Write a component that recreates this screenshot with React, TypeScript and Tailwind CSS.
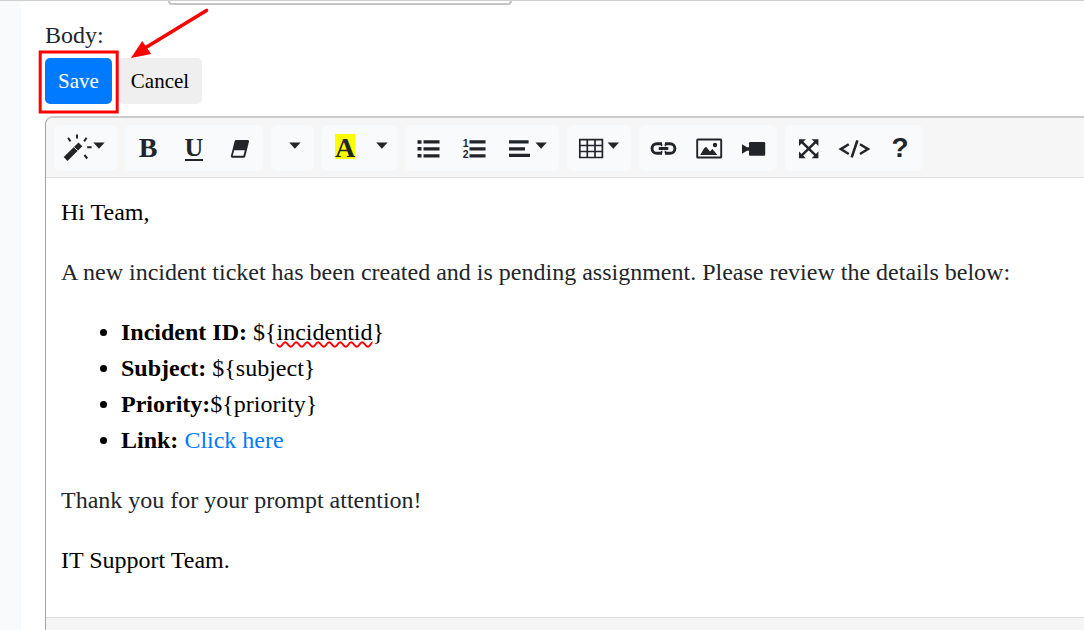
import type { ReactNode } from "react";

const INK = "#212529";

function Caret({ x }: { x: number }) {
  return <path d={`M${x} 17.5h11.4l-5.7 6.2z`} fill={INK} />;
}

type ToolProps = { label: string; w?: string; vw?: number; children: ReactNode };

function Tool({ label, w = "w-[46px]", vw = 46, children }: ToolProps) {
  return (
    <button type="button" aria-label={label} className={`h-[46px] shrink-0 ${w}`}>
      <svg viewBox={`0 0 ${vw} 46`} className="block h-full w-full" fill="none" aria-hidden="true">
        {children}
      </svg>
    </button>
  );
}

function TextTool({ label, children }: { label: string; children: ReactNode }) {
  return (
    <button
      type="button"
      aria-label={label}
      className="flex h-[46px] w-[46px] shrink-0 items-start justify-center text-[28px] leading-[46px] font-bold text-[#212529]"
    >
      {children}
    </button>
  );
}

function Group({ children }: { children: ReactNode }) {
  return <div className="flex shrink-0 rounded-md bg-[#f8fafc]">{children}</div>;
}

function Toolbar() {
  return (
    <div role="toolbar" aria-label="Formatting" className="flex gap-2 overflow-hidden rounded-tl-lg border-b border-[#dfdfdf] bg-[#f6f6f6] px-2 pt-[7px] pb-[6px]">
      <Group>
        <Tool label="Style" w="w-[63px]" vw={63}>
          <path d="M11.6 34L26.4 19.4" stroke={INK} strokeWidth="5.4" />
          <path d="M20.2 22.2l3.6 3.6" stroke="#f8fafc" strokeWidth="0.9" />
          <path d="M23 9.5v4M14 12.8l2.5 3.6M32.6 12.8l-2.5 3.6M33.2 22.2h4.4M30.4 30l2.9 3.5" stroke={INK} strokeWidth="2" />
          <Caret x={39.3} />
        </Tool>
      </Group>
      <Group>
        <TextTool label="Bold"><span>B</span></TextTool>
        <TextTool label="Underline"><span className="mt-3 border-b-2 border-[#212529] text-[26px] leading-[22px]">U</span></TextTool>
        <Tool label="Remove formatting">
          <path d="M19.4 15h11.4q1.6 0 1.2 1.6L28.3 31.2q-.4 1.5-2 1.5H15.3q-1.8 0-1.4-1.6L17.6 16.4q.4-1.4 1.8-1.4z" fill={INK} />
          <path d="M17.2 25.2h10.6l-1.4 5.6H15.7z" fill="#f8fafc" />
        </Tool>
      </Group>
      <Group>
        <Tool label="Font" w="w-[43px]" vw={43}><Caret x={18.2} /></Tool>
      </Group>
      <Group>
        <TextTool label="Text colour"><span className="mt-[9px] h-[25px] bg-[#ffff00] leading-7">A</span></TextTool>
        <Tool label="More colours" w="w-[29px]" vw={29}><Caret x={8.2} /></Tool>
      </Group>
      <Group>
        <Tool label="Bulleted list">
          <path d="M12.5 15.2h4v3.6h-4zM12.5 22h4v3.6h-4zM12.5 29h4v3.6h-4zM18.5 15.2h16v3.4h-16zM18.5 22.2h16v3.4h-16zM18.5 29.2h16v3.4h-16z" fill={INK} />
        </Tool>
        <Tool label="Numbered list">
          <text x="11.8" y="22.2" fontSize="10.5" className="font-bold" fontFamily="Liberation Sans, sans-serif" fill={INK}>1</text>
          <text x="11.8" y="32.9" fontSize="10.5" className="font-bold" fontFamily="Liberation Sans, sans-serif" fill={INK}>2</text>
          <path d="M18.5 15.2h16v3.4h-16zM18.5 22.2h16v3.4h-16zM18.5 29.2h16v3.4h-16z" fill={INK} />
        </Tool>
        <Tool label="Paragraph" w="w-[62px]" vw={62}>
          <path d="M12 15.3h19.6v3.3H12zM12 22.3h16v3.3H12zM12 28.7h21v3.3H12z" fill={INK} />
          <Caret x={38.4} />
        </Tool>
      </Group>
      <Group>
        <Tool label="Table" w="w-[64px]" vw={64}>
          <path d="M12.8 14.6h22.6v17.9H12.8zM20.3 14.5v18M28 14.5v18M12.5 20.5h23M12.5 26.5h23" stroke={INK} strokeWidth="1.7" />
          <Caret x={40.6} />
        </Tool>
      </Group>
      <Group>
        <Tool label="Link">
          <path d="M23 18.7h-5.2a4.8 4.8 0 0 0 0 9.6H23M26 18.7h5.1a4.8 4.8 0 0 1 0 9.6H26M19.8 23.5h9.5" stroke={INK} strokeWidth="2.9" />
          <path d="M22.6 18.7v2.6M22.6 25.7v2.6M26.4 18.7v2.6M26.4 25.7v2.6" stroke={INK} strokeWidth="1.5" />
        </Tool>
        <Tool label="Picture">
          <rect x="12.2" y="14.5" width="24" height="18" rx="0.6" stroke={INK} strokeWidth="1.9" />
          <path d="M15.2 30l3.8-6.4 2-1.8 4 4.6 2.4-2.4 5 6z" fill={INK} />
          <circle cx="30" cy="20" r="2.2" fill={INK} />
        </Tool>
        <Tool label="Video">
          <path d="M11 19.2l5 3h2v3.6h-2l-5 3z" fill={INK} />
          <rect x="18" y="17" width="16.2" height="13.8" rx="1.2" fill={INK} />
        </Tool>
      </Group>
      <Group>
        <Tool label="Full screen">
          <path d="M16 16.2l15.4 15M31.4 16.2l-15.4 15" stroke={INK} strokeWidth="2.5" />
          <path d="M14 14.2h6.8L14 21zM33.4 14.2h-6.8l6.8 6.8zM14 33.2h6.8L14 26.4zM33.4 33.2h-6.8l6.8-6.8z" fill={INK} />
        </Tool>
        <Tool label="Code view">
          <path d="M17.8 19.2l-8 4.9 8 4.9M29 19.2l8 4.9-8 4.9" stroke={INK} strokeWidth="2.5" />
          <path d="M26.4 15.4l-5.7 17" stroke={INK} strokeWidth="2.6" />
        </Tool>
        <TextTool label="Help"><span className="font-['Liberation_Sans',sans-serif]">?</span></TextTool>
      </Group>
    </div>
  );
}

export default function App() {
  return (
    <div className="relative flex min-h-screen overflow-hidden bg-white font-['Liberation_Serif',serif] text-2xl leading-9 text-[#212529]">
      <div className="w-[21px] shrink-0 border-t border-[#cfcfd2] bg-[#f8fafc]" />
      <main className="flex min-w-0 grow flex-col border-t border-[#cfcfd2] pl-6">
        <input aria-label="Subject" className="ml-[123px] h-1 w-[344px] shrink-0 rounded-b-md border-2 border-t-0 border-[#c4c4c4]" />
        <p id="body-label" className="mt-3">Body:</p>
        <div className="mt-[5px] flex gap-[6px] text-[21px] leading-[30px]">
          <button type="button" className="h-[46px] rounded-[5px] bg-[#007bff] px-[13px] text-white">Save</button>
          <button type="button" className="h-[46px] rounded-[5px] bg-[#efefef] px-[13px] text-black">Cancel</button>
        </div>
        <section aria-labelledby="body-label" className="mt-3 rounded-tl-lg rounded-bl-lg border-t-2 border-l border-t-[#cccccc] border-l-[#a3a3a3]">
          <Toolbar />
          <article className="px-[15px] pt-4 pb-[39px]">
            <p className="mb-6 text-black">Hi Team,</p>
            <p className="mb-6">A new incident ticket has been created and is pending assignment. Please review the details below:</p>
            <ul className="mb-6 list-disc pl-[60px] text-black">
              <li>
                <b>Incident ID:</b> {"${"}
                <span className="underline decoration-[#ff0000] decoration-wavy decoration-2 underline-offset-1">incidentid</span>
                {"}"}
              </li>
              <li><b>Subject:</b> {"${subject}"}</li>
              <li><b>Priority:</b>{"${priority}"}</li>
              <li><b>Link:</b> <a href="#" className="text-[#007bff]">Click here</a></li>
            </ul>
            <p className="mb-6">Thank you for your prompt attention!</p>
            <p className="text-black">IT Support Team.</p>
          </article>
          <div className="h-5 rounded-bl-lg border-t border-[#dddddd] bg-[#f5f5f5]" />
        </section>
      </main>
      <svg className="pointer-events-none absolute top-0 left-0" width="220" height="120" fill="none" aria-hidden="true">
        <rect x="40.2" y="52" width="77" height="60" stroke="#ff0000" strokeWidth="3" />
        <path d="M206.5 10.5L145 48" stroke="#ff0000" strokeWidth="3.6" strokeLinecap="round" />
        <path d="M131 58l11.2-17 9 13z" fill="#ff0000" />
      </svg>
    </div>
  );
}
